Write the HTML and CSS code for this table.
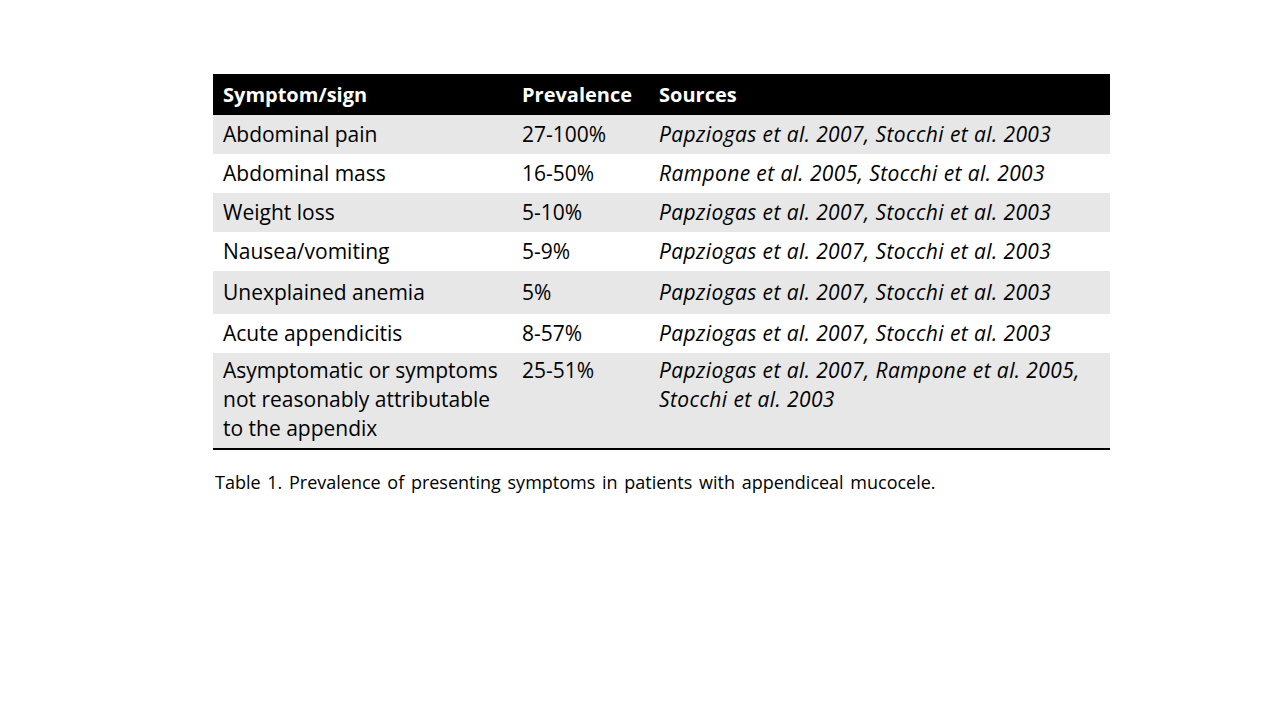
FILE: index.html
```html
<!DOCTYPE html>
<html>
<head>
<meta charset="utf-8">
<link rel="stylesheet" href="styles.css">
</head>
<body>
<div class="slide">
  <table class="tbl">
    <colgroup><col class="c1"><col class="c2"><col class="c3"></colgroup>
    <thead>
      <tr><th>Symptom/sign</th><th>Prevalence</th><th>Sources</th></tr>
    </thead>
    <tbody>
      <tr class="g"><td>Abdominal pain</td><td>27-100%</td><td class="src">Papziogas et al. 2007, Stocchi et al. 2003</td></tr>
      <tr><td>Abdominal mass</td><td>16-50%</td><td class="src">Rampone et al. 2005, Stocchi et al. 2003</td></tr>
      <tr class="g"><td>Weight loss</td><td>5-10%</td><td class="src">Papziogas et al. 2007, Stocchi et al. 2003</td></tr>
      <tr><td>Nausea/vomiting</td><td>5-9%</td><td class="src">Papziogas et al. 2007, Stocchi et al. 2003</td></tr>
      <tr class="g tall"><td>Unexplained anemia</td><td>5%</td><td class="src">Papziogas et al. 2007, Stocchi et al. 2003</td></tr>
      <tr><td>Acute appendicitis</td><td>8-57%</td><td class="src">Papziogas et al. 2007, Stocchi et al. 2003</td></tr>
      <tr class="g last"><td>Asymptomatic or symptoms<br>not reasonably attributable<br>to the appendix</td><td>25-51%</td><td class="src">Papziogas et al. 2007, Rampone et al. 2005,<br>Stocchi et al. 2003</td></tr>
    </tbody>
  </table>
  <p class="caption">Table 1. Prevalence of presenting symptoms in patients with appendiceal mucocele.</p>
</div>
</body>
</html>
```
FILE: styles.css
```css
html, body {
  margin: 0;
  padding: 0;
  background: #ffffff;
}
.slide {
  width: 1280px;
  height: 720px;
  padding: 74px 0 0 213px;
  box-sizing: border-box;
  font-family: "Open Sans", "Liberation Sans", sans-serif;
  color: #000;
}
.tbl {
  width: 897px;
  border-collapse: collapse;
  table-layout: fixed;
  font-size: 21px;
}
.c1 { width: 299px; }
.c2 { width: 137px; }
.c3 { width: 461px; }
.tbl th {
  background: #000;
  color: #fff;
  font-size: 20px;
  font-weight: 700;
  text-align: left;
  height: 41px;
  padding: 0 10px;
  box-sizing: border-box;
  line-height: 29px;
}
.tbl td {
  text-align: left;
  vertical-align: middle;
  height: 39px;
  padding: 0 10px;
  box-sizing: border-box;
  line-height: 29px;
  white-space: nowrap;
}
.tbl tr.g td { background: #e7e7e7; }
.tbl tr.tall td { height: 43px; }
.tbl tr.last td {
  vertical-align: top;
  height: 96px;
  padding-top: 3px;
  border-bottom: 2px solid #000;
}
.src {
  font-style: italic;
  letter-spacing: 0.4px;
}
.caption {
  margin: 20px 0 0 2px;
  font-size: 18px;
  word-spacing: 2px;
}
```
